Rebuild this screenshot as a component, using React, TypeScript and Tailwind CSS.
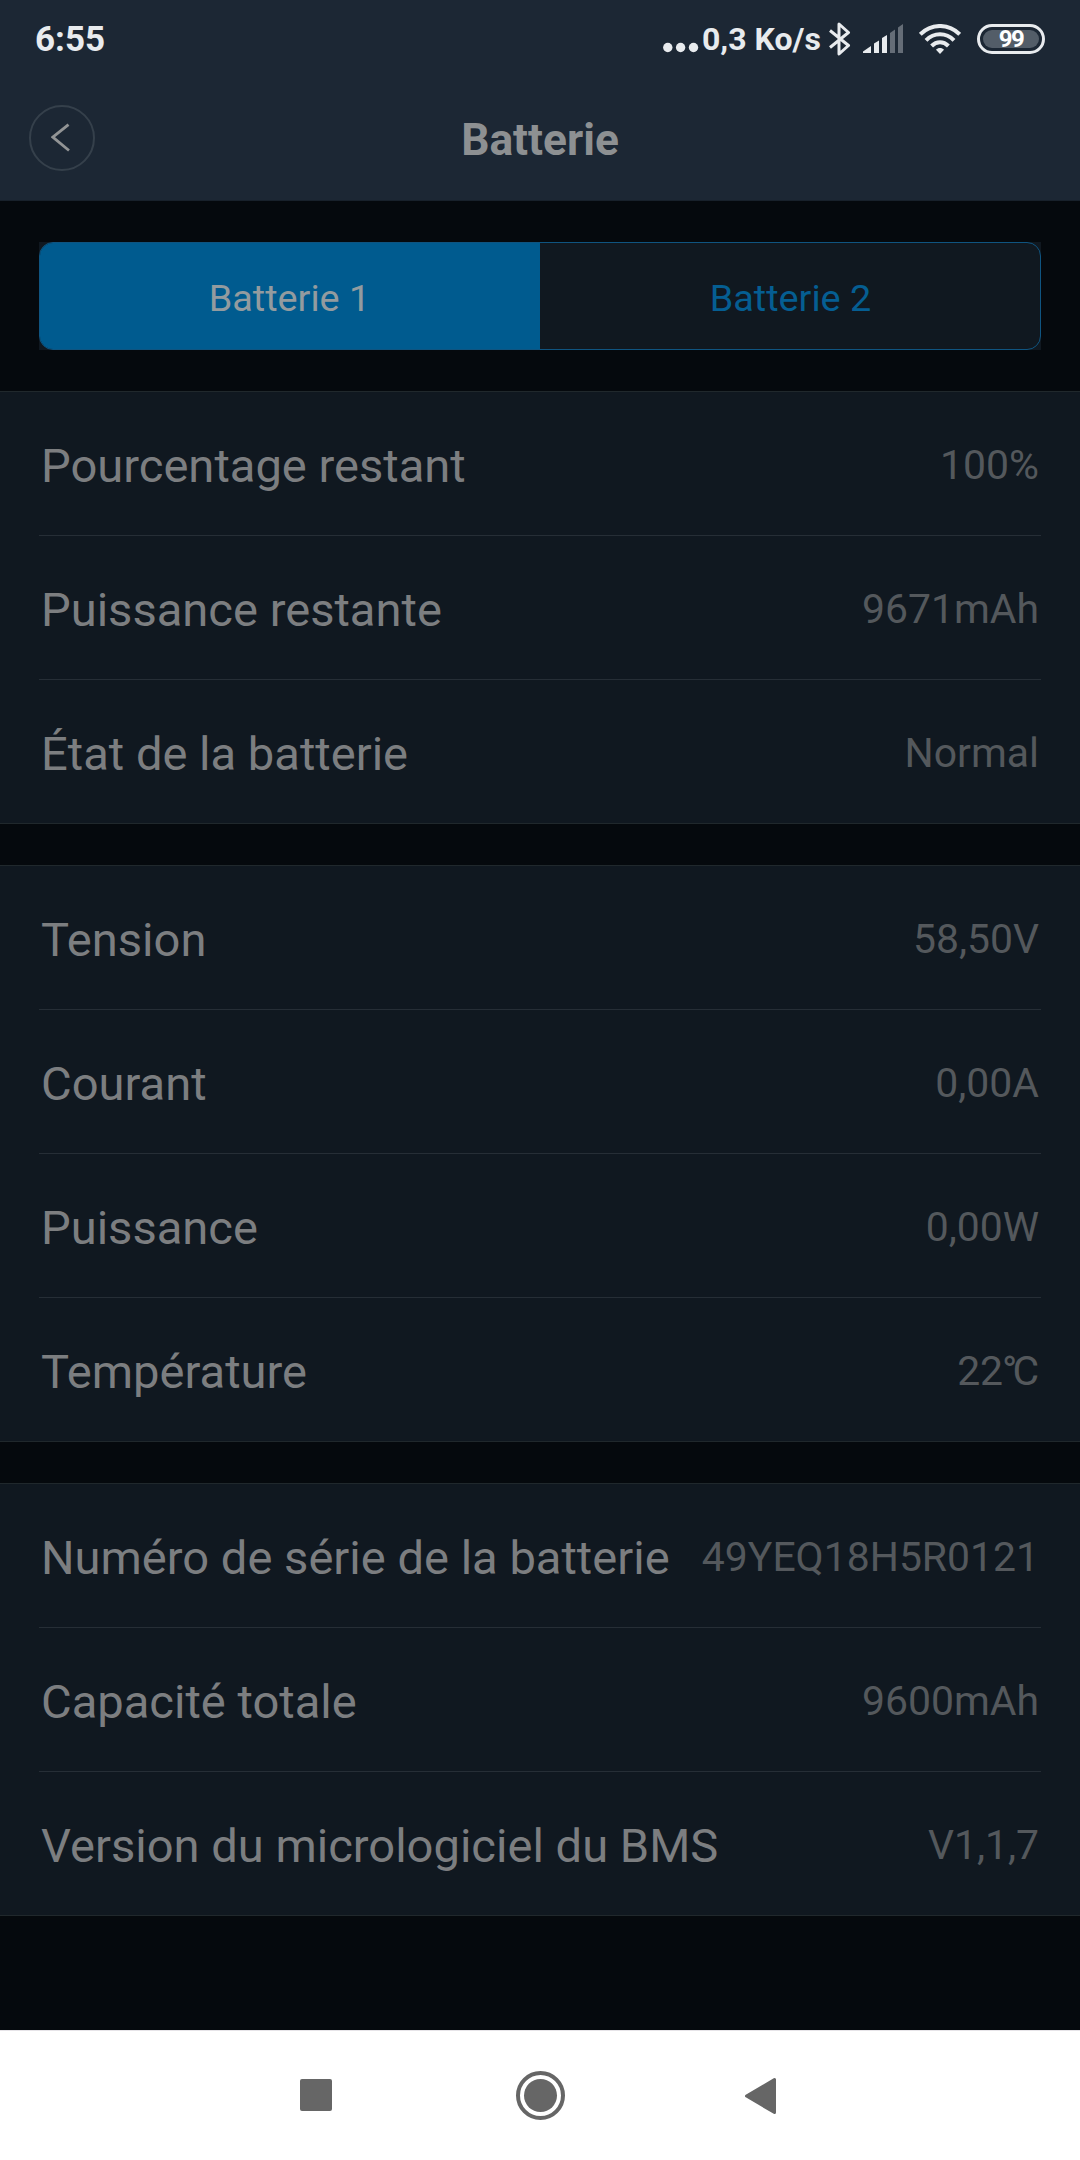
import type { ReactNode } from "react";

type Row = { label: string; value: ReactNode };

const sections: Row[][] = [
  [
    { label: "Pourcentage restant", value: "100%" },
    { label: "Puissance restante", value: "9671mAh" },
    { label: "État de la batterie", value: "Normal" },
  ],
  [
    { label: "Tension", value: "58,50V" },
    { label: "Courant", value: "0,00A" },
    { label: "Puissance", value: "0,00W" },
    // Degree sign is tucked against the C
    { label: "Température", value: <>22<span className="-ml-[1px] tracking-[-5px]">°</span>C</> },
  ],
  [
    { label: "Numéro de série de la batterie", value: "49YEQ18H5R0121" },
    { label: "Capacité totale", value: "9600mAh" },
    { label: "Version du micrologiciel du BMS", value: "V1,1,7" },
  ],
];

const StatusBar = () => {
  return (
    <div className="flex h-[78px] items-center justify-between px-[35px] text-[#e8ebee]">
      <span className="text-[35px] font-bold leading-none">6:55</span>
      <div className="flex items-center">
        <svg width="36" height="34" viewBox="0 0 36 34" fill="currentColor">
          <circle cx="4.8" cy="25.5" r="4.7" />
          <circle cx="17.6" cy="25.5" r="4.7" />
          <circle cx="30.5" cy="25.5" r="4.7" />
        </svg>
        <span className="ml-[3px] w-[127px] whitespace-nowrap text-[32px] font-bold leading-none">0,3 Ko/s</span>
        <svg width="22" height="34" viewBox="0 0 22 34" fill="none" stroke="currentColor" strokeWidth="3" strokeLinejoin="round">
          <path d="M1 8.5 L19.5 23.5 L10 32 V2 L19.5 10.5 L1 25.5" />
        </svg>
        <svg className="ml-[12px]" width="41" height="30" viewBox="0 0 41 30" fill="currentColor">
          <path d="M0 29 V27.5 L8 22 V29 Z" />
          <path d="M11 29 V19.5 L16 16.5 V29 Z" />
          <path d="M19 29 V14 L24 11 V29 Z" />
          <path d="M27 29 V9 L32 5.5 V29 Z" opacity="0.36" />
          <path d="M35 29 V3.5 L40 0 V29 Z" opacity="0.36" />
        </svg>
        <svg className="ml-[15px]" width="42" height="30" viewBox="0 0 42 30" fill="none" stroke="currentColor" strokeWidth="4">
          <path d="M1.3 10.3 C12.5 -0.8 29.5 -0.8 40.7 10.3" />
          <path d="M7 16.3 C15 8.2 27 8.2 35 16.3" />
          <path d="M12.6 22 C17.5 17 24.5 17 29.4 22" />
          <path d="M17 25.8 C19 23.4 23 23.4 25 25.8 L21 30 Z" fill="currentColor" stroke="none" />
        </svg>
        <div className="ml-[16px] h-[30px] w-[68px] rounded-full border-[3px] border-current p-[3px]">
          <div className="flex h-full items-center justify-center rounded-full bg-[#535d68] text-[24px] font-bold leading-none tracking-[-1.5px] text-white">
            99
          </div>
        </div>
      </div>
    </div>
  );
};

const Header = () => {
  return (
    <header className="h-[201px] border-b border-[#18212b] bg-[#1c2734]">
      <StatusBar />
      <div className="grid h-[120px] grid-cols-[66px_1fr_66px] items-center px-[29px]">
        <button className="flex size-[66px] items-center justify-center rounded-full border-2 border-[#35404b] pr-[2px]">
          <svg width="20" height="30" viewBox="0 0 20 30" fill="none" stroke="#929495" strokeWidth="2.8">
            <path d="M17.5 1.7 L1.8 14.2 L18 27.5" />
          </svg>
        </button>
        <h1 className="pt-[5px] text-center text-[44.3px] font-bold leading-none text-[#8d9092]">Batterie</h1>
      </div>
    </header>
  );
};

const Tabs = () => {
  return (
    <div className="mx-[39px] mt-[41px] bg-[#101820]">
      <div className="grid h-[108px] grid-cols-[500px_1fr] overflow-hidden rounded-[14px] border border-[#0f5480] text-[37.8px]">
        <button className="-my-px -ml-px bg-[#005b8f] pt-[4px] text-[#939b9f]">Batterie 1</button>
        <button className="pt-[4px] pl-px text-[#055e92]">Batterie 2</button>
      </div>
    </div>
  );
};

const Section = ({ rows }: { rows: Row[] }) => {
  return (
    <section className="mt-[41px] border-y border-[#20282c] bg-[#101820]">
      <div className="mx-[39px] divide-y divide-[#262e36]">
        {rows.map(({ label, value }) => (
          <div key={label} className="flex h-[144px] items-center justify-between px-[2px] last:h-[143px]">
            <span className="whitespace-nowrap pt-[6px] text-[47.1px] text-[#7c7e80]">{label}</span>
            <span className="whitespace-nowrap pt-[5px] text-[40.9px] text-[#54585c]">{value}</span>
          </div>
        ))}
      </div>
    </section>
  );
};

const NavBar = () => {
  return (
    <nav className="flex h-[130px] items-center border-t border-[#e6e4e8] bg-white pl-[300px] text-[#666]">
      <div className="mb-px size-8 rounded-[2px] bg-current" />
      <svg className="ml-[184px]" width="49" height="49" viewBox="0 0 49 49" fill="currentColor">
        <circle cx="24.5" cy="24.5" r="22.5" fill="none" stroke="currentColor" strokeWidth="4" />
        <circle cx="24.5" cy="24.5" r="16.5" />
      </svg>
      <svg className="ml-[180px]" width="31" height="38" viewBox="0 0 31 38" fill="currentColor" stroke="currentColor" strokeWidth="3" strokeLinejoin="round">
        <path d="M1.5 19 L29.5 2.5 V35.5 Z" />
      </svg>
    </nav>
  );
};

export default function App() {
  return (
    <div className="flex h-[2160px] w-[1080px] flex-col overflow-hidden bg-[#05090d] font-['Roboto',sans-serif]">
      <Header />
      <main className="flex-1">
        <Tabs />
        {sections.map((rows, idx) => (
          <Section key={idx} rows={rows} />
        ))}
      </main>
      <NavBar />
    </div>
  );
}
